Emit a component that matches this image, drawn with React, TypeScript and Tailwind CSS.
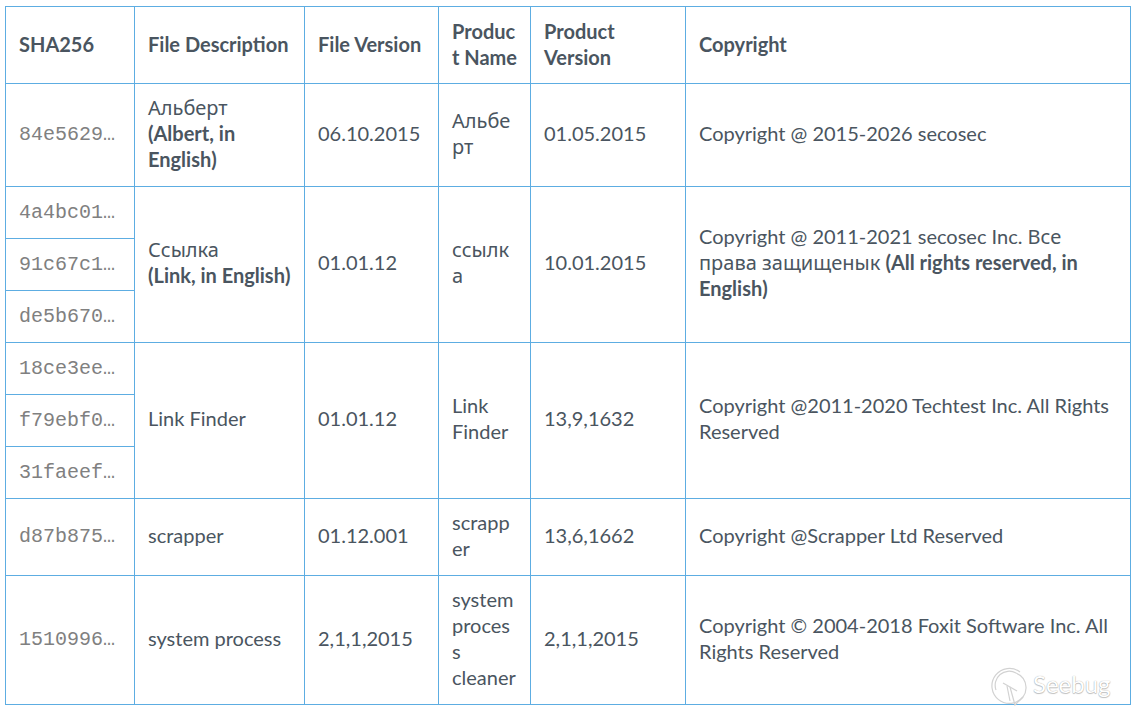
const th = "border border-[#5dade2] pl-[13px] pr-[11px] pt-[11px] pb-[13px] text-left font-bold align-middle break-words";
const td = "border border-[#5dade2] pl-[13px] pr-[12px] pt-[10px] pb-[14px] text-left align-middle font-normal break-words";
const tdSpan = "border border-[#5dade2] pl-[13px] pr-[12px] pt-[9px] pb-[15px] text-left align-middle font-normal break-words";
const mono = "border border-[#5dade2] pl-[13px] pr-[13px] py-[12px] text-left align-middle overflow-hidden whitespace-nowrap text-ellipsis text-[#808080] text-[20px] leading-[27px] font-['Liberation_Mono',monospace]";
const monoTall = "border border-[#5dade2] pl-[13px] pr-[13px] pt-[11px] pb-[13px] text-left align-middle overflow-hidden whitespace-nowrap text-ellipsis text-[#808080] text-[20px] leading-[27px] font-['Liberation_Mono',monospace]";
const b = "font-bold";
const ru = "font-['Noto_Sans',sans-serif] leading-[18px]";

function Logo() {
  return (
    <div className="absolute left-[990px] top-[666px] flex items-center gap-[3px] pointer-events-none">
      <svg width="40" height="42" viewBox="0 0 40 42" fill="none" stroke="#d2d2d2" strokeWidth="1.2">
        <path d="M33 31 A17.5 17.5 0 1 1 30 6" />
        <path d="M6 24 A14 14 0 0 1 26 7 A16 16 0 0 1 36 21" />
        <path d="M13 17 L27 25" />
        <path d="M20 21 L25 39 L33 31 A15 15 0 0 0 36 21" />
        <path d="M17 20 L20 35" />
      </svg>
      <span className="text-[24px] leading-none text-white font-['Lato',sans-serif] [text-shadow:0_0_1px_#9a9a9a,0_1px_1px_#c4c4c4] mt-[-7px]">Seebug</span>
    </div>
  );
}

export default function App() {
  return (
    <div className="relative w-[1137px] h-[713px] bg-white overflow-hidden font-['Lato','Noto_Sans',sans-serif] text-[20px] leading-[26px] text-[#4a5560]">
      <div className="pt-[6px] pl-[5px]">
        <table className="table-fixed border-collapse w-[1125px]">
          <colgroup>
            <col className="w-[129px]" />
            <col className="w-[170px]" />
            <col className="w-[134px]" />
            <col className="w-[92px]" />
            <col className="w-[155px]" />
            <col className="w-[445px]" />
          </colgroup>
          <thead>
            <tr>
              <th className={th}>SHA256</th>
              <th className={th}>File Description</th>
              <th className={th}>File Version</th>
              <th className={th}>Product Name</th>
              <th className={th}>Product Version</th>
              <th className={th}>Copyright</th>
            </tr>
          </thead>
          <tbody>
            <tr>
              <td className={monoTall}>84e56294b1cf</td>
              <td className={td}><span className={ru}>Альберт</span><br /><span className={b}>(Albert, in English)</span></td>
              <td className={td}>06.10.2015</td>
              <td className={td}><span className={ru}>Альберт</span></td>
              <td className={td}>01.05.2015</td>
              <td className={td}>Copyright @ 2015-2026 secosec</td>
            </tr>
            <tr>
              <td className={mono}>4a4bc01a7d3e</td>
              <td className={tdSpan} rowSpan={3}><span className={ru}>Ссылка</span><br /><span className={b}>(Link, in English)</span></td>
              <td className={tdSpan} rowSpan={3}>01.01.12</td>
              <td className={tdSpan} rowSpan={3}><span className={ru}>ссылка</span></td>
              <td className={tdSpan} rowSpan={3}>10.01.2015</td>
              <td className={tdSpan} rowSpan={3}>Copyright @ 2011-2021 secosec Inc. <span className={ru}>Все права защищенык</span> <span className={b}>(All rights reserved, in English)</span></td>
            </tr>
            <tr><td className={mono}>91c67c1e20ab</td></tr>
            <tr><td className={mono}>de5b670f93cd</td></tr>
            <tr>
              <td className={mono}>18ce3ee40b7a</td>
              <td className={tdSpan} rowSpan={3}>Link Finder</td>
              <td className={tdSpan} rowSpan={3}>01.01.12</td>
              <td className={tdSpan} rowSpan={3}>Link Finder</td>
              <td className={tdSpan} rowSpan={3}>13,9,1632</td>
              <td className={tdSpan} rowSpan={3}>Copyright @2011-2020 Techtest Inc. All Rights Reserved</td>
            </tr>
            <tr><td className={mono}>f79ebf0c5a12</td></tr>
            <tr><td className={mono}>31faeef68d04</td></tr>
            <tr>
              <td className={monoTall}>d87b875e16f3</td>
              <td className={td}>scrapper</td>
              <td className={td}>01.12.001</td>
              <td className={td}>scrapper</td>
              <td className={td}>13,6,1662</td>
              <td className={td}>Copyright @Scrapper Ltd Reserved</td>
            </tr>
            <tr>
              <td className={monoTall}>1510996a4c8b</td>
              <td className={td}>system process</td>
              <td className={td}>2,1,1,2015</td>
              <td className={td}>system process cleaner</td>
              <td className={td}>2,1,1,2015</td>
              <td className={td}>Copyright © 2004-2018 Foxit Software Inc. All Rights Reserved</td>
            </tr>
          </tbody>
        </table>
      </div>
      <Logo />
    </div>
  );
}
